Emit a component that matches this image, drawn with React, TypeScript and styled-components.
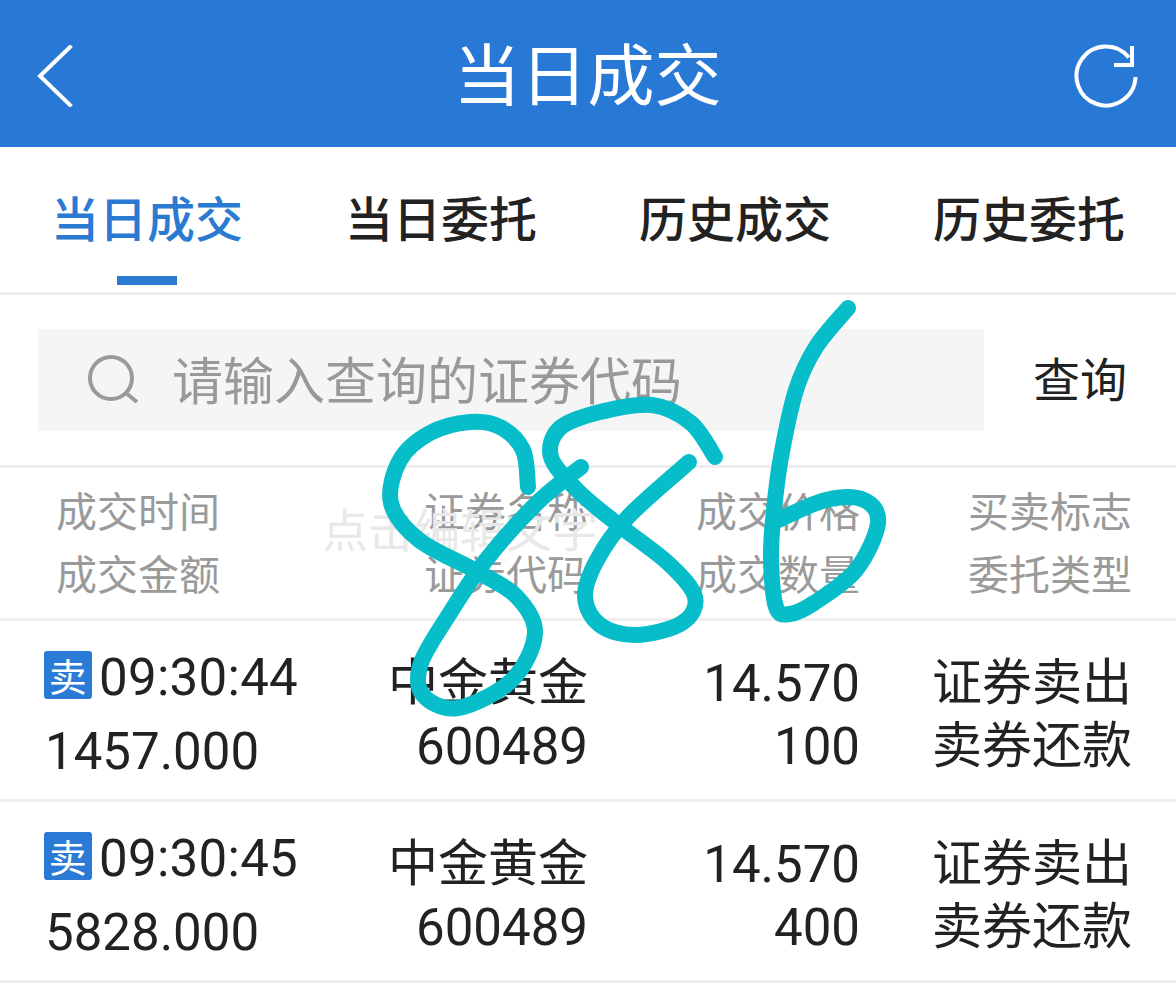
import styled, { createGlobalStyle } from 'styled-components';

const CJK = `'Noto Sans CJK SC', 'Noto Sans', sans-serif`;
const NUM = `Roboto, 'Noto Sans CJK SC', sans-serif`;

const tabs = ['当日成交', '当日委托', '历史成交', '历史委托'];

const records = [
  { time: '09:30:44', amount: '1457.000', qty: '100' },
  { time: '09:30:45', amount: '5828.000', qty: '400' },
];

// handwritten strokes over the page, in page coordinates
const strokes: [number, number][][] = [
  [[528, 487], [523, 450], [500, 427], [470, 422], [430, 433], [400, 460], [391, 503], [419, 540], [474, 570], [516, 596], [535, 633], [512, 680], [458, 708], [423, 695], [421, 663], [450, 613], [486, 560], [537, 503], [581, 467]],
  [[715, 457], [691, 423], [652, 405], [600, 412], [560, 428], [551, 457], [577, 490], [616, 523], [668, 563], [695, 597], [682, 623], [636, 635], [600, 625], [585, 597], [597, 560], [628, 517], [689, 462]],
  [[848, 308], [816, 347], [796, 390], [781, 457], [774, 510], [771, 557], [776, 607], [790, 614], [814, 603], [856, 570], [878, 523], [864, 500], [826, 500], [778, 520]],
];

const smooth = (pts: [number, number][]) => {
  let d = `M${pts[0][0]} ${pts[0][1]}`;
  for (let i = 0; i < pts.length - 1; i++) {
    const p0 = pts[i - 1] || pts[i];
    const p1 = pts[i];
    const p2 = pts[i + 1];
    const p3 = pts[i + 2] || p2;
    const c1x = p1[0] + (p2[0] - p0[0]) / 6;
    const c1y = p1[1] + (p2[1] - p0[1]) / 6;
    const c2x = p2[0] - (p3[0] - p1[0]) / 6;
    const c2y = p2[1] - (p3[1] - p1[1]) / 6;
    d += ` C${c1x} ${c1y} ${c2x} ${c2y} ${p2[0]} ${p2[1]}`;
  }
  return d;
};

const App = () => {
  return (
    <>
      <GlobalStyle />
      <Page>
        <TopBar>
          <svg width="40" height="62" viewBox="0 0 40 62" fill="none">
            <path d="M36 2 L6 31 L36 60" stroke="#fff" strokeWidth="4" strokeLinecap="square" strokeLinejoin="miter" />
          </svg>
          <Title>当日成交</Title>
          <svg width="66" height="66" viewBox="0 0 66 66" fill="none">
            <path d="M62.5 34 A29.5 29.5 0 1 1 56 14.5" stroke="#fff" strokeWidth="4" />
            <path d="M59 3 V22 H41" stroke="#fff" strokeWidth="4" />
          </svg>
        </TopBar>
        <TabBar>
          {tabs.map((tab, i) => (
            <Tab key={tab} $active={i === 0}>
              {tab}
              {i === 0 && <Indicator />}
            </Tab>
          ))}
        </TabBar>
        <SearchRow>
          <SearchBox>
            <svg width="54" height="50" viewBox="0 0 54 50" fill="none">
              <circle cx="24" cy="23" r="21" stroke="#9a9a9a" strokeWidth="4" />
              <path d="M39 38 L50 47" stroke="#9a9a9a" strokeWidth="4" />
            </svg>
            <Placeholder>请输入查询的证券代码</Placeholder>
          </SearchBox>
          <SearchButton>查询</SearchButton>
        </SearchRow>
        <HeadRow>
          <HeadFirst>
            <span>成交时间</span>
            <span>成交金额</span>
          </HeadFirst>
          <HeadCell>
            <span>证券名称</span>
            <span>证券代码</span>
          </HeadCell>
          <HeadCell>
            <span>成交价格</span>
            <span>成交数量</span>
          </HeadCell>
          <HeadCell>
            <span>买卖标志</span>
            <span>委托类型</span>
          </HeadCell>
        </HeadRow>
        {records.map((r) => (
          <Row key={r.time}>
            <TimeCell>
              <TimeLine>
                <SideBadge>卖</SideBadge>
                {r.time}
              </TimeLine>
              <AmountLine>{r.amount}</AmountLine>
            </TimeCell>
            <Cell>
              <Label>中金黄金</Label>
              <Figure>600489</Figure>
            </Cell>
            <Cell>
              <Figure>14.570</Figure>
              <Figure>{r.qty}</Figure>
            </Cell>
            <Cell>
              <Label>证券卖出</Label>
              <Label>卖券还款</Label>
            </Cell>
          </Row>
        ))}
        <Watermark>点击编辑文字</Watermark>
        <Scribble width="1176" height="988" viewBox="0 0 1176 988" fill="none">
          {strokes.map((pts, i) => (
            <path key={i} d={smooth(pts)} stroke="#06bdc9" strokeWidth="16" strokeLinecap="round" strokeLinejoin="round" />
          ))}
        </Scribble>
      </Page>
    </>
  );
};

export default App;

const GlobalStyle = createGlobalStyle`
  html, body {
    margin: 0;
    padding: 0;
    background: #fff;
  }
`;

const Page = styled.div`
  position: relative;
  width: 1176px;
  height: 988px;
  overflow: hidden;
  background: #fff;
  color: #222;
  font-family: ${NUM};
`;

const TopBar = styled.header`
  height: 147px;
  box-sizing: border-box;
  padding: 4px 37px 0 34px;
  background: #2879d5;
  display: flex;
  align-items: center;
  justify-content: space-between;
`;

const Title = styled.h1`
  margin: 0 0 10px 28px;
  font-family: ${CJK};
  font-size: 67px;
  font-weight: 400;
  color: #fff;
`;

const TabBar = styled.nav`
  height: 148px;
  box-sizing: border-box;
  border-bottom: 3px solid #eee;
  display: flex;
`;

const Tab = styled.div<{ $active: boolean }>`
  position: relative;
  flex: 1;
  display: flex;
  justify-content: center;
  padding-top: 34px;
  font-family: ${CJK};
  font-size: 48px;
  line-height: 70px;
  font-weight: 500;
  color: ${(props) => (props.$active ? '#2a7ad2' : '#222')};
`;

const Indicator = styled.span`
  position: absolute;
  left: 117px;
  bottom: 7px;
  width: 60px;
  height: 9px;
  background: #2a7ad2;
`;

const SearchRow = styled.div`
  height: 173px;
  box-sizing: border-box;
  border-bottom: 3px solid #eee;
  padding: 34px 49px 0 38px;
  display: flex;
  align-items: flex-start;
  justify-content: space-between;
`;

const SearchBox = styled.div`
  width: 946px;
  height: 102px;
  box-sizing: border-box;
  padding-left: 49px;
  background: #f5f5f5;
  display: flex;
  align-items: center;
  gap: 31px;
`;

const Placeholder = styled.span`
  margin-bottom: 4px;
  font-family: ${CJK};
  font-size: 51px;
  color: #999;
`;

const SearchButton = styled.span`
  margin-top: -3px;
  font-family: ${CJK};
  font-size: 47px;
  line-height: 102px;
  color: #222;
`;

const HeadRow = styled.div`
  height: 153px;
  box-sizing: border-box;
  border-bottom: 3px solid #eee;
  padding: 10px 44px 0 46px;
  display: grid;
  grid-template-columns: 1fr repeat(3, 272px);
`;

const HeadCell = styled.div`
  display: flex;
  flex-direction: column;
  align-items: flex-end;
  font-family: ${CJK};
  font-size: 41px;
  line-height: 63px;
  color: #9a9a9a;
`;

const HeadFirst = styled(HeadCell)`
  align-items: flex-start;
  padding-left: 10px;
`;

const Row = styled.div`
  height: 181px;
  box-sizing: border-box;
  border-bottom: 3px solid #eee;
  padding: 31px 44px 0 44px;
  display: grid;
  grid-template-columns: 1fr repeat(3, 272px);
`;

const Cell = styled.div`
  display: flex;
  flex-direction: column;
  align-items: flex-end;
  line-height: 63px;
  color: #222;
`;

const Label = styled.span`
  margin: -5px 0 5px;
  font-family: ${CJK};
  font-size: 50px;
`;

const Figure = styled.span`
  font-family: ${NUM};
  font-size: 51px;
`;

const TimeCell = styled.div`
  display: flex;
  flex-direction: column;
  margin-top: -11px;
  font-size: 51px;
  line-height: 73px;
`;

const TimeLine = styled.div`
  display: flex;
  align-items: center;
  gap: 7px;
  letter-spacing: 0.3px;
`;

const AmountLine = styled.div`
  padding: 1px 0 0 1px;
`;

const SideBadge = styled.span`
  width: 48px;
  height: 48px;
  margin: 2px 0 8px;
  border-radius: 3px;
  background: #2a7ad6;
  color: #fff;
  font-family: ${CJK};
  font-size: 38px;
  line-height: 48px;
  text-align: center;
`;

const Watermark = styled.div`
  position: absolute;
  left: 322px;
  top: 494px;
  font-family: ${CJK};
  font-size: 46px;
  line-height: 66px;
  color: #e8e8e8;
  pointer-events: none;
`;

const Scribble = styled.svg`
  position: absolute;
  left: 0;
  top: 0;
  pointer-events: none;
`;
